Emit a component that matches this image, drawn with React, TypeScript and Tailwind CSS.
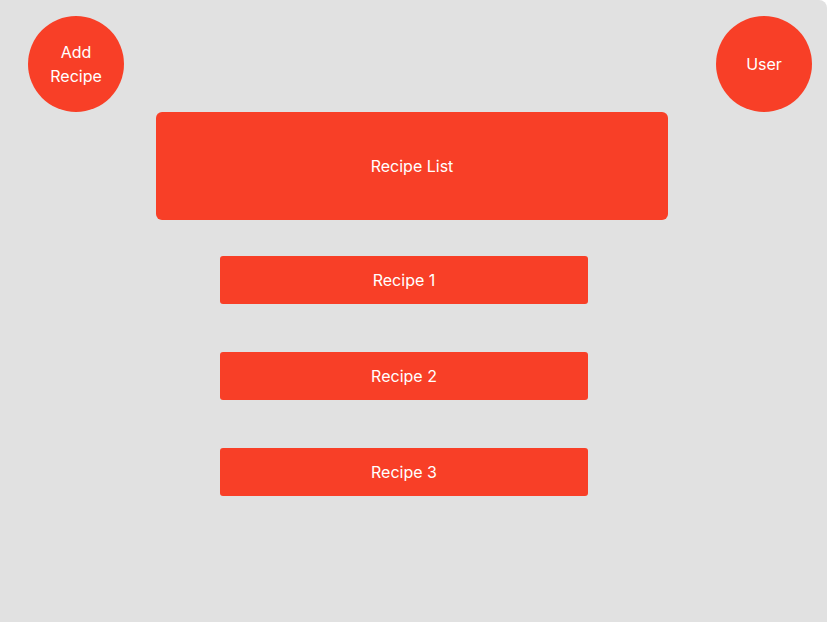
export default function App() {
  const recipes = ["Recipe 1", "Recipe 2", "Recipe 3"];

  return (
    <div className="bg-white min-h-screen">
      <div
        className="w-[827px] h-[622px] bg-[#e1e1e1] rounded-tr-[8px] text-white text-base leading-6"
        style={{ fontFamily: "Inter, 'Liberation Sans', sans-serif" }}
      >
        {/* Header */}
        <div className="flex justify-between pt-4 pl-7 pr-[15px]">
          <button className="w-24 h-24 rounded-full bg-[#f83f27] flex items-center justify-center text-center">
            Add
            <br />
            Recipe
          </button>
          <button className="w-24 h-24 rounded-full bg-[#f83f27] flex items-center justify-center">
            User
          </button>
        </div>

        {/* Recipe List */}
        <div className="pl-[156px]">
          <div className="w-[512px] h-[108px] rounded-md bg-[#f83f27] flex items-center justify-center">
            Recipe List
          </div>
        </div>

        <div className="pl-[220px] pt-9 flex flex-col gap-12">
          {recipes.map((r) => (
            <div
              key={r}
              className="w-[368px] h-12 rounded-[3px] bg-[#f83f27] flex items-center justify-center"
            >
              {r}
            </div>
          ))}
        </div>
      </div>
    </div>
  );
}
